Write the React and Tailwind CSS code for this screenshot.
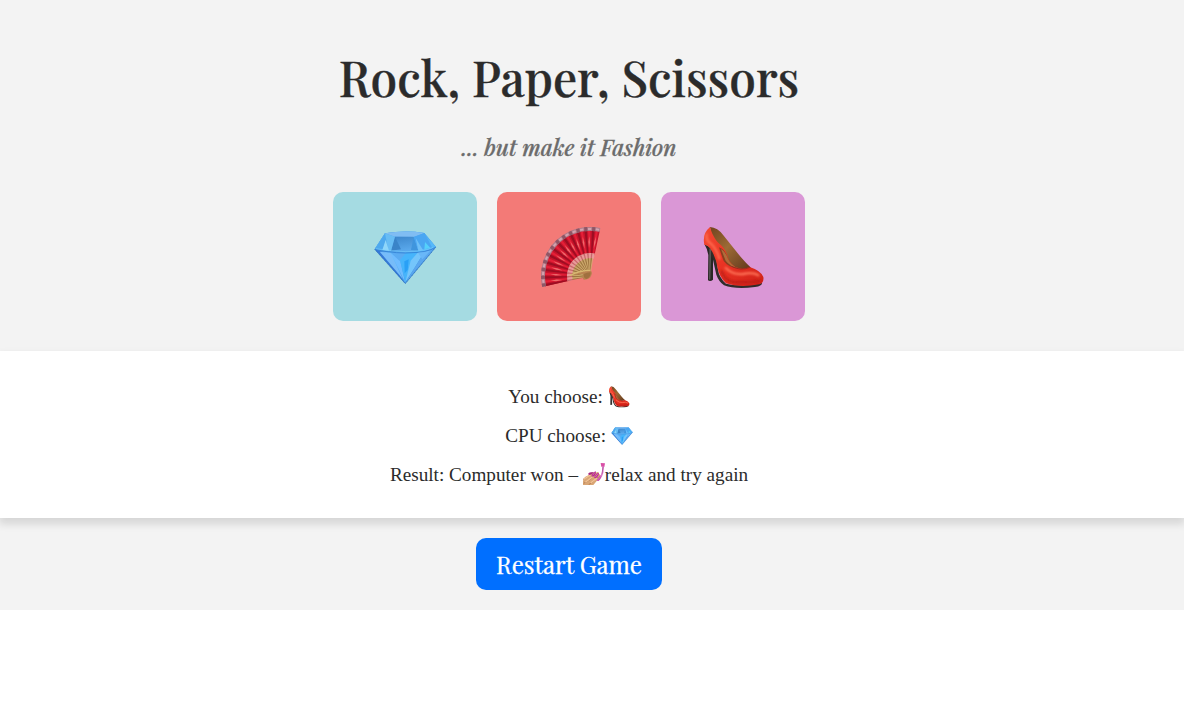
import React from "react";

const Diamond = ({ className }) => (
  <svg className={className} viewBox="24 18 192 192" aria-label="Diamond">
    <defs>
      <linearGradient id="gemTop" x1="0" x2="1" y1="0" y2="0.3">
        <stop offset="0" stopColor="#5cb4f3" />
        <stop offset=".5" stopColor="#4a9be6" />
        <stop offset="1" stopColor="#55b8fa" />
      </linearGradient>
      <linearGradient id="gemBase" x1="0" x2="1" y1="0" y2="0.5">
        <stop offset="0" stopColor="#2669c8" />
        <stop offset=".4" stopColor="#68c7ff" />
        <stop offset="1" stopColor="#2477d5" />
      </linearGradient>
      <linearGradient id="gemTable" x1="0" x2="0.3" y1="0" y2="1">
        <stop offset="0" stopColor="#3c86cb" />
        <stop offset="1" stopColor="#5aa9ec" />
      </linearGradient>
    </defs>
    <path d="M60 40 Q120 30 178 39 L213 81 L121 191 L29 88Z" fill="url(#gemBase)" />
    <path d="M60 40 Q120 30 178 39 L213 81 Q198 96 121 99 Q47 97 29 88Z" fill="url(#gemTop)" />
    <path d="M60 40 Q120 30 178 39 L146 51 L90 50Z" fill="#80bdf3" />
    <path d="M90 50H146L160 92Q121 98 78 92Z" fill="url(#gemTable)" />
    <path d="M90 50L108 88L78 92Z" fill="#3a84c8" />
    <path d="M146 51L138 90L160 92Z" fill="#3f95dd" />
    <path d="M60 40L90 50L78 93L29 88Z" fill="#68bdf4" />
    <path d="M60 40L70 92L29 88Z" fill="#4ea9ee" />
    <path d="M62 60L72 92L52 90Z" fill="#8fd6fa" />
    <path d="M146 51L178 39L202 84L160 92Z" fill="#4aa6f2" />
    <path d="M152 54L174 90L160 92Z" fill="#6fc0f8" />
    <path d="M180 66L196 84L178 88Z" fill="#55d0fb" />
    <path d="M29 88L60 98L121 191Z" fill="#3478d6" />
    <path d="M44 95L77 98L113 176Z" fill="#77bcf9" />
    <path d="M77 98L105 120L121 189Z" fill="#6fbcff" />
    <path d="M77 98H123L104 123Z" fill="#5aabf2" />
    <path d="M123 99L157 97L137 146L121 187L105 121Z" fill="#46b4fb" />
    <path d="M118 124L131 118L128 150L119 160Z" fill="#29a0f6" />
    <path d="M137 122L159 97L179 94L149 143L121 187Z" fill="#74c5fb" />
    <path d="M179 94L211 82L151 152L121 189Z" fill="#5aa6ee" />
    <path d="M160 100L198 90L172 118Z" fill="#69b7f8" />
    <path d="M31 88Q66 98 121 99Q191 98 211 82" fill="none" stroke="#2a74cc" strokeWidth="2" />
    <path d="M33 86Q79 94 122 95Q177 94 204 82" fill="none" stroke="#7fd2fd" strokeWidth="1.5" />
    <path d="M29 88L121 191L213 81" fill="none" stroke="#2b67b0" strokeWidth="2" strokeDasharray="4 2" />
  </svg>
);

const polar = (r, deg) => {
  const a = (deg * Math.PI) / 180;
  return `${180 + r * Math.cos(a)} ${168 + r * Math.sin(a)}`;
};
const band = (r1, r2, a, b) =>
  `M${polar(r1, a)}L${polar(r2, a)}A${r2} ${r2} 0 0 1 ${polar(r2, b)}L${polar(r1, b)}A${r1} ${r1} 0 0 0 ${polar(r1, a)}Z`;
const pleats = Array.from({ length: 12 }, (_, i) => 167 + i * 9.6);

const Fan = ({ className }) => (
  <svg className={className} viewBox="21 18 192 192" aria-label="Folding fan">
    <path d={band(12, 65, 168, 278)} fill="#b79257" />
    <path d={band(64, 138, 167, 282.2)} fill="#c5142b" />
    {pleats.map((a) => (
      <g key={a}>
        <path d={band(68, 138, a, a + 3)} fill="#9c0d22" />
        <path d={band(68, 137, a + 4.5, a + 7.5)} fill="#e51f37" />
        <path d={`M${polar(84, a + 5)}L${polar(103, a + 4.3)}L${polar(119, a + 6)}L${polar(101, a + 7)}Z`} fill="#ee6a6c" />
        <path d={band(135, 147, a, a + 9.6)} fill="#b07c8a" />
        <path d={band(135, 147, a, a + 3.8)} fill="#8e5665" />
        <path d={band(138, 144, a + 4.5, a + 8.5)} fill="#d3a3ae" />
        <path d={band(53, 69, a, a + 9.6)} fill="#e99a99" />
        <path d={band(53, 69, a, a + 3.4)} fill="#c9656c" />
        <path d={`M${polar(14, a)}L${polar(54, a + 2)}`} stroke="#8f6334" strokeWidth="2" />
        <path d={`M${polar(14, a + 4)}L${polar(54, a + 6)}`} stroke="#d9b678" strokeWidth="2" />
      </g>
    ))}
    <path d="M107 172Q145 158 176 151Q190 152 184 166Q179 180 161 179Q155 173 161 162Q143 160 107 172Z" fill="#ba8350" />
    <path d="M161 162Q173 156 182 157Q183 171 170 177Q160 176 161 162Z" fill="#a0703f" />
    <path d="M120 166Q151 151 181 151" fill="none" stroke="#d9b871" strokeWidth="4" />
  </svg>
);

const Heel = ({ className }) => (
  <svg className={className} viewBox="18 24 192 192" aria-label="High-heeled shoe">
    <defs>
      <linearGradient id="heelRed" x1="0" x2="1" y1="0" y2="1">
        <stop offset="0" stopColor="#f24932" />
        <stop offset=".5" stopColor="#e93223" />
        <stop offset="1" stopColor="#cf2118" />
      </linearGradient>
      <linearGradient id="heelLining" x1="0" x2="1" y1="0" y2="1">
        <stop offset="0" stopColor="#71431f" />
        <stop offset=".45" stopColor="#9c6b35" />
        <stop offset="1" stopColor="#60351c" />
      </linearGradient>
      <filter id="heelSoft" x="-20%" y="-20%" width="140%" height="140%">
        <feGaussianBlur stdDeviation="3" />
      </filter>
    </defs>
    <path d="M28 78L54 92L54 185Q46 192 39 187L40 111Q36 90 28 78Z" fill="#292724" />
    <path d="M43 91L49 94L46 184L42 185Z" fill="#565552" />
    <path d="M50 85Q65 115 69 155Q72 178 93 197Q136 208 201 195Q202 204 180 207Q122 215 87 202Q71 190 64 170L50 107Z" fill="#302c29" />
    <path d="M45 27Q68 28 85 52L138 118Q154 137 168 149Q145 158 111 154Q77 136 57 94Z" fill="url(#heelLining)" />
    <path d="M45 27C50 44 58 64 74 78Q92 92 98 116Q106 144 133 151Q147 154 164 147Q198 158 205 177Q208 193 193 199Q133 210 93 196Q73 177 68 151Q63 116 45 91Q38 81 28 80Q21 47 45 27Z" fill="url(#heelRed)" />
    <path d="M72 88Q90 95 97 117Q106 143 128 150Q101 149 86 129Q79 111 72 88Z" fill="#8a3f20" />
    <path d="M78 93Q91 100 99 122Q108 142 128 150Q106 146 92 128Z" fill="#b06c3a" />
    <g filter="url(#heelSoft)" fill="none" strokeLinecap="round">
      <path d="M35 50Q32 68 49 78Q65 94 73 122" stroke="#ff6b50" strokeWidth="7" />
      <path d="M92 150Q115 172 145 168Q173 161 190 172" stroke="#ff7458" strokeWidth="7" />
      <path d="M80 160Q87 184 111 191Q154 196 194 189" stroke="#b81c16" strokeWidth="6" />
    </g>
    <path d="M110 145Q137 160 165 148" fill="none" stroke="#92291e" strokeWidth="2.5" />
  </svg>
);

const NailPolish = ({ className }) => (
  <svg className={className} viewBox="0 0 66 66" aria-label="Nail polish">
    <path d="M0 55Q1 43 12 39L27 29Q34 25 36 31L43 27Q50 28 47 34L50 34Q56 38 48 46L31 66H0Z" fill="#d9a675" />
    <path d="M0 49Q15 42 27 32M2 61Q21 53 35 37M17 65Q32 57 45 42" fill="none" stroke="#a66c46" strokeWidth="2" />
    <path d="M3 48L25 34M7 58L32 39M23 60L43 44" stroke="#f2c396" strokeWidth="4" />
    <path d="M15 34Q17 27 30 27Q30 33 20 36Z" fill="#a72880" />
    <path d="M25 40Q28 28 38 25Q42 31 31 41Z" fill="#b52c8b" />
    <path d="M33 44Q38 31 47 29Q51 34 39 46Z" fill="#bc3492" />
    <path d="M41 53Q47 39 55 36Q58 43 47 54Z" fill="#c54aa6" />
    <path d="M29 37L36 28M37 42L45 32M45 50L53 40" stroke="#e77acd" strokeWidth="2" />
    <path d="M53 0L66 1L64 12L55 11Z" fill="#d94fa6" />
    <path d="M58 10L63 11L61 30L56 43L52 40L57 27Z" fill="#d876c3" />
    <path d="M60 12L57 32" stroke="#aa4c9b" strokeWidth="2" />
  </svg>
);

const choices = [
  { name: "Diamond", Icon: Diamond, tone: "bg-[#a5dbe2]" },
  { name: "Fan", Icon: Fan, tone: "bg-[#f37a77]" },
  { name: "Heel", Icon: Heel, tone: "bg-[#da97d6]" },
];

export default function App() {
  return (
    <main className="min-h-[708px] w-full overflow-x-hidden bg-white font-['Playfair_Display','Liberation_Serif',serif] text-[#2b2b2b]">
      <div className="h-[610px] bg-[#f3f3f3]">
        <header className="flex h-[351px] flex-col items-center pr-[46px] pt-[45px]">
          <h1 className="h-[64px] whitespace-nowrap text-[48px] font-medium leading-[64px] [-webkit-text-stroke:0.4px_#2b2b2b]">
            Rock, Paper, Scissors
          </h1>
          <h2 className="mt-[22px] h-[32px] whitespace-nowrap text-[22.4px] font-medium italic leading-[32px] text-[#6c6c6c] [-webkit-text-stroke:0.3px_#6c6c6c]">
            ... but make it Fashion
          </h2>
          <div className="mt-[29px] flex gap-5">
            {choices.map(({ name, Icon, tone }) => (
              <button key={name} aria-label={name} className={`flex h-[129px] w-36 justify-center rounded-[10px] pt-[34px] ${tone}`}>
                <Icon className="size-16" />
              </button>
            ))}
          </div>
        </header>
        <section className="flex h-[167px] flex-col items-center bg-white pr-[46px] pt-[27px] font-['Liberation_Serif',serif] text-[19.2px] shadow-[0_5px_8px_1px_rgba(0,0,0,0.12)]">
          <p className="flex h-[39px] items-center whitespace-pre">You choose: <Heel className="mb-[2px] size-[22px]" /></p>
          <p className="flex h-[39px] items-center whitespace-pre">CPU choose: <Diamond className="mb-px size-[22px]" /></p>
          <p className="flex h-[39px] items-center whitespace-pre">Result: Computer won – <NailPolish className="mb-[3px] size-[22px]" />relax and try again</p>
        </section>
        <div className="flex justify-center pr-[46px] pt-5">
          <button className="h-[52px] w-[186px] whitespace-nowrap rounded-[10px] bg-[#006fff] text-[24px] leading-[52px] text-white [-webkit-text-stroke:0.3px_white]">
            Restart Game
          </button>
        </div>
      </div>
    </main>
  );
}
